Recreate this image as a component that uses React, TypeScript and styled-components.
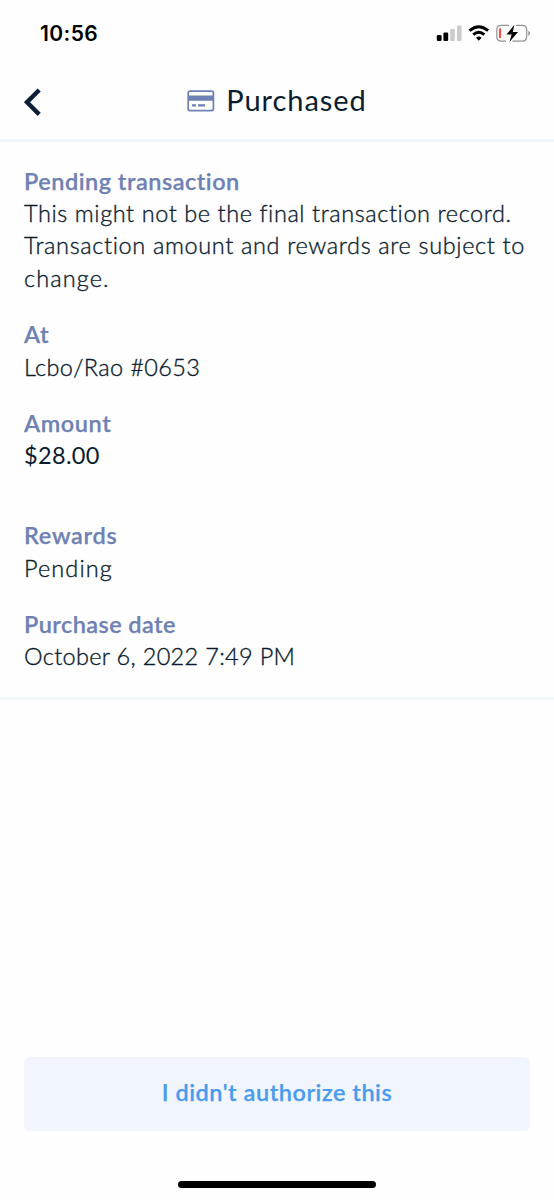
import React from 'react';
import styled, { createGlobalStyle } from 'styled-components';

const GlobalStyle = createGlobalStyle`
  * { box-sizing: border-box; }
  html, body { margin: 0; padding: 0; background: #fefefe; }
`;

const Screen = styled.div`
  width: 554px;
  height: 1200px;
  display: flex;
  flex-direction: column;
  overflow: hidden;
  background: #fefefe;
  color: #0b1c2f;
  font-family: Lato, 'Open Sans', sans-serif;
`;

const StatusBar = styled.div`
  height: 66px;
  flex: none;
  display: flex;
  align-items: center;
  justify-content: space-between;
  padding: 0 22px 0 40px;
`;

const Clock = styled.span`
  font: 600 21px/26px Inter, sans-serif;
  letter-spacing: 0.4px;
  padding-top: 2px;
  color: #000;
`;

const StatusIcons = styled.svg`
  width: 98px;
  height: 24px;
  display: block;
`;

const Header = styled.header`
  height: 75.5px;
  flex: none;
  display: grid;
  grid-template-columns: 24px 1fr 24px;
  align-items: center;
  padding: 0 24px 3px;
  border-bottom: 3px solid #f2f5fc;
`;

const BackButton = styled.button`
  width: 24px;
  height: 32px;
  padding: 2px 0 0;
  border: 0;
  background: none;
  display: block;
`;

const Title = styled.h1`
  margin: 0;
  display: flex;
  align-items: center;
  justify-content: center;
  gap: 11px;
  font-size: 29px;
  line-height: 36px;
  font-weight: 400;
  letter-spacing: 0.95px;
`;

const TitleText = styled.span`
  padding-bottom: 2px;
`;

const Details = styled.main`
  flex: none;
  height: 558px;
  padding: 23px 24px 0;
  border-bottom: 3px solid #f2f5fc;
`;

const Field = styled.section<{ $gap?: number }>`
  margin-bottom: ${({ $gap = 24 }) => $gap}px;
`;

const Label = styled.h2<{ $tracking?: number }>`
  margin: 0;
  font-size: 23.5px;
  line-height: 32.4px;
  font-weight: 600;
  color: #6e81b4;
  -webkit-text-stroke: 0.25px #6e81b4;
  letter-spacing: ${({ $tracking = 0.5 }) => $tracking}px;
`;

const Value = styled.p<{ $tracking?: number; $strong?: boolean }>`
  margin: 0;
  font-size: 23.5px;
  line-height: 32.4px;
  font-weight: ${({ $strong }) => ($strong ? 400 : 300)};
  -webkit-text-stroke: ${({ $strong }) => ($strong ? '0' : '0.35px #0b1c2f')};
  letter-spacing: ${({ $tracking = 0.8 }) => $tracking}px;
  white-space: nowrap;
`;

const Footer = styled.footer`
  margin-top: auto;
  padding: 0 24px 12px;
  display: flex;
  flex-direction: column;
  align-items: center;
`;

const ActionButton = styled.button`
  width: 100%;
  height: 73.5px;
  padding: 0 0 3px;
  border: 0;
  border-radius: 6px;
  background: #f0f5fe;
  color: #4b9bed;
  font: 600 23.5px/32px Lato, sans-serif;
  -webkit-text-stroke: 0.25px #4b9bed;
  letter-spacing: 0.52px;
`;

const HomeIndicator = styled.div`
  width: 198px;
  height: 7.5px;
  margin-top: 50px;
  border-radius: 4px;
  background: #000;
`;

const CardIcon = () => (
  <svg width="28" height="22" viewBox="0 0 28 22">
    <rect x="1.2" y="1.2" width="25.2" height="19.4" rx="1.8" fill="none" stroke="#6e81b4" strokeWidth="1.7" />
    <path d="M1 5.4H27V10.8H1ZM5 14.2H9V16.6H5ZM11 14.2H18V16.6H11Z" fill="#6e81b4" />
  </svg>
);

const BackIcon = () => (
  <svg width="24" height="30" viewBox="0 0 24 30">
    <path d="M15.2 3L3 15.2L15.2 27.4" fill="none" stroke="#0b2036" strokeWidth="4.4" />
  </svg>
);

const Indicators = () => (
  <StatusIcons viewBox="0 0 98 24">
    <rect x="2.8" y="14" width="4.8" height="6" rx="1.3" />
    <rect x="9.4" y="11.4" width="4.8" height="8.6" rx="1.3" />
    <rect x="16.2" y="8" width="4.6" height="12" rx="1.3" fill="#cbcbcb" />
    <rect x="23" y="4.5" width="4.6" height="15.5" rx="1.3" fill="#cbcbcb" />
    <g fill="none" stroke="#000" strokeWidth="3">
      <path d="M35.5 9.7Q44.8 1.8 54.1 9.7" />
      <path d="M39.3 13.6Q44.8 8.9 50.3 13.6" />
    </g>
    <path d="M42 16.7Q44.8 14.5 47.6 16.7L44.8 19.7Z" />
    <path d="M75 4.4H67.5Q62.8 4.4 62.8 9V15.4Q62.8 20.1 67.5 20.1H72M82 4.4H88.2Q92.7 4.4 92.7 9V15.4Q92.7 20.1 88.2 20.1H78.5" fill="none" stroke="#929292" strokeWidth="1.2" />
    <path d="M94.3 9.8Q98 12.3 94.3 14.9Z" fill="#929292" />
    <rect x="64.9" y="7.2" width="2.2" height="10" rx="1" fill="#f5524a" />
    <path d="M80.4 3.8L72.4 13.6H77.6L75.5 21L84 10.9H78.8Z" />
  </StatusIcons>
);

export default function App() {
  return (
    <Screen>
      <GlobalStyle />
      <StatusBar>
        <Clock>10:56</Clock>
        <Indicators />
      </StatusBar>
      <Header>
        <BackButton aria-label="Back"><BackIcon /></BackButton>
        <Title><CardIcon /><TitleText>Purchased</TitleText></Title>
      </Header>
      <Details>
        <Field>
          <Label>Pending transaction</Label>
          <Value $tracking={0.58}>This might not be the final transaction record.</Value>
          <Value $tracking={0.64}>Transaction amount and rewards are subject to</Value>
          <Value $tracking={1.1}>change.</Value>
        </Field>
        <Field>
          <Label>At</Label>
          <Value $tracking={0.35}>Lcbo/Rao #0653</Value>
        </Field>
        <Field $gap={47.5}>
          <Label $tracking={0.6}>Amount</Label>
          <Value $tracking={0.35} $strong>$28.00</Value>
        </Field>
        <Field>
          <Label $tracking={0.7}>Rewards</Label>
          <Value $tracking={1.1}>Pending</Value>
        </Field>
        <Field>
          <Label $tracking={0.42}>Purchase date</Label>
          <Value $tracking={0.32}>October 6, 2022 7:49 PM</Value>
        </Field>
      </Details>
      <Footer>
        <ActionButton>I didn't authorize this</ActionButton>
        <HomeIndicator />
      </Footer>
    </Screen>
  );
}
